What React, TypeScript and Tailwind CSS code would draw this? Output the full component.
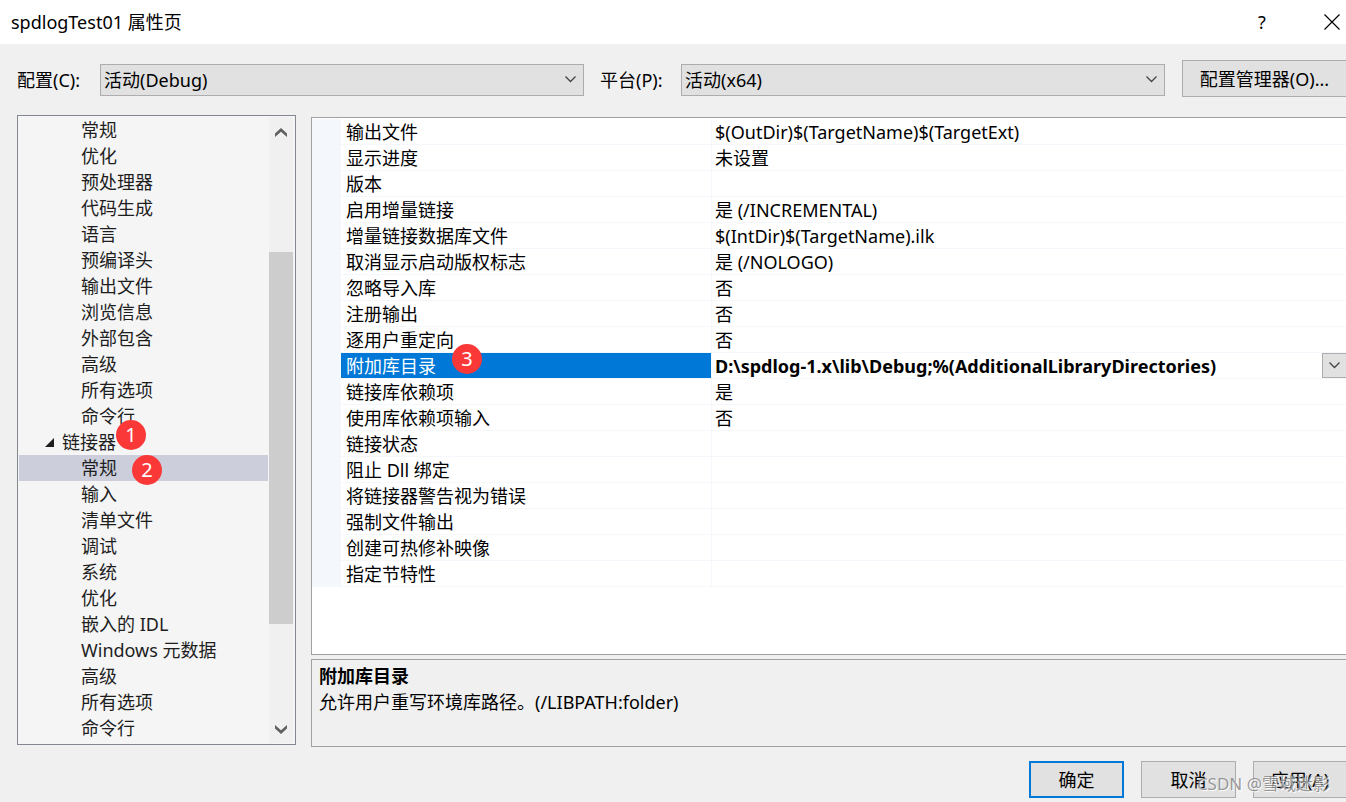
import React, { useState } from "react";
import clsx from "clsx";

type TreeNode = { id: string; label: string; parent?: boolean; badge?: string };
type Property = { name: string; value: string; badge?: string };

const treeNodes: TreeNode[] = [
  { id: "cpp-general", label: "常规" },
  { id: "cpp-optimize", label: "优化" },
  { id: "cpp-preprocessor", label: "预处理器" },
  { id: "cpp-codegen", label: "代码生成" },
  { id: "cpp-language", label: "语言" },
  { id: "cpp-pch", label: "预编译头" },
  { id: "cpp-output", label: "输出文件" },
  { id: "cpp-browse", label: "浏览信息" },
  { id: "cpp-external", label: "外部包含" },
  { id: "cpp-advanced", label: "高级" },
  { id: "cpp-all", label: "所有选项" },
  { id: "cpp-cmd", label: "命令行" },
  { id: "linker", label: "链接器", parent: true, badge: "1" },
  { id: "link-general", label: "常规", badge: "2" },
  { id: "link-input", label: "输入" },
  { id: "link-manifest", label: "清单文件" },
  { id: "link-debug", label: "调试" },
  { id: "link-system", label: "系统" },
  { id: "link-optimize", label: "优化" },
  { id: "link-idl", label: "嵌入的 IDL" },
  { id: "link-winmd", label: "Windows 元数据" },
  { id: "link-advanced", label: "高级" },
  { id: "link-all", label: "所有选项" },
  { id: "link-cmd", label: "命令行" },
];

const properties: Property[] = [
  { name: "输出文件", value: "$(OutDir)$(TargetName)$(TargetExt)" },
  { name: "显示进度", value: "未设置" },
  { name: "版本", value: "" },
  { name: "启用增量链接", value: "是 (/INCREMENTAL)" },
  { name: "增量链接数据库文件", value: "$(IntDir)$(TargetName).ilk" },
  { name: "取消显示启动版权标志", value: "是 (/NOLOGO)" },
  { name: "忽略导入库", value: "否" },
  { name: "注册输出", value: "否" },
  { name: "逐用户重定向", value: "否" },
  { name: "附加库目录", value: "D:\\spdlog-1.x\\lib\\Debug;%(AdditionalLibraryDirectories)", badge: "3" },
  { name: "链接库依赖项", value: "是" },
  { name: "使用库依赖项输入", value: "否" },
  { name: "链接状态", value: "" },
  { name: "阻止 Dll 绑定", value: "" },
  { name: "将链接器警告视为错误", value: "" },
  { name: "强制文件输出", value: "" },
  { name: "创建可热修补映像", value: "" },
  { name: "指定节特性", value: "" },
];

export default function App() {
  const [activeNode, setActiveNode] = useState("link-general");
  const [activeProperty, setActiveProperty] = useState("附加库目录");

  return (
    <div className="relative flex min-h-screen flex-col overflow-hidden bg-[#f0f0f0] font-['Noto_Sans','Noto_Sans_CJK_SC',sans-serif] text-lg/[26px] text-black">
      {/* Title bar */}
      <header className="flex h-11 items-center bg-white pl-[11px] pr-1.5">
        <h1 className="flex-1">spdlogTest01 属性页</h1>
        <button aria-label="帮助" className="mr-[54px] w-4 text-center">?</button>
        <button aria-label="关闭" className="py-2">
          <svg width="16" height="16" viewBox="0 0 16 16" fill="none" stroke="#000" strokeWidth="1.2">
            <path d="M.5.5l15 15M15.5.5l-15 15" />
          </svg>
        </button>
      </header>

      {/* Configuration and platform */}
      <div className="flex items-end pt-4 pl-[17px]">
        <label htmlFor="config" className="w-[83px] pb-1">配置(C):</label>
        <Dropdown id="config" option="活动(Debug)" />
        <label htmlFor="platform" className="ml-4 w-[81px] pb-1">平台(P):</label>
        <Dropdown id="platform" option="活动(x64)" />
        <button className="ml-[17px] h-[37px] w-[164px] border border-r-0 border-[#adadad] bg-[#e1e1e1]">
          配置管理器(O)...
        </button>
      </div>

      <main className="flex flex-1 gap-[15px] pt-[18px] pl-[17px]">
        {/* Category tree */}
        <nav className="mb-0.5 flex w-[279px] shrink-0 border border-[#828790] bg-[#f5f5f5] p-px">
          <ul className="flex-1 text-[#1e1e1e]">
            {treeNodes.map((node) => (
              <li key={node.id} className="relative">
                <button
                  onClick={() => setActiveNode(node.id)}
                  className={clsx(
                    "flex h-[26px] w-full items-center text-left",
                    node.parent ? "gap-2 pl-[26px]" : "pl-[62px]",
                    activeNode === node.id && "bg-[#cccedb]"
                  )}
                >
                  {node.parent && (
                    <svg width="9" height="9" viewBox="0 0 9 9" fill="#1e1e1e">
                      <path d="M9 0v9H0z" />
                    </svg>
                  )}
                  {node.label}
                </button>
                {node.badge && (
                  <Badge label={node.badge} className={node.parent ? "-top-[9px] left-[97px]" : "top-0 left-[113px]"} />
                )}
              </li>
            ))}
          </ul>
          <ScrollBar />
        </nav>

        <div className="flex min-w-0 flex-1 flex-col gap-1 pt-0.5">
          {/* Property grid */}
          <div className="flex-1 border border-r-0 border-[#a0a0a0] bg-white pt-px">
            <table className="w-full table-fixed border-separate border-spacing-0">
              <colgroup>
                <col className="w-[29px]" />
                <col className="w-[370px]" />
                <col />
              </colgroup>
              <tbody>
                {properties.map((property) => (
                  <PropertyRow
                    key={property.name}
                    property={property}
                    active={property.name === activeProperty}
                    onSelect={() => setActiveProperty(property.name)}
                  />
                ))}
              </tbody>
            </table>
          </div>

          {/* Description */}
          <section className="h-[88px] border border-r-0 border-[#a0a0a0] px-[7px] pt-[3px]">
            <h2 className="font-bold">附加库目录</h2>
            <p>允许用户重写环境库路径。(/LIBPATH:folder)</p>
          </section>
        </div>
      </main>

      <footer className="flex justify-end gap-[17px] pt-3.5 pb-1">
        <button className="h-[37px] w-[95px] border-2 border-[#0078d7] bg-[#e1e1e1]">确定</button>
        <button className="h-[37px] w-[95px] border border-[#adadad] bg-[#e1e1e1]">取消</button>
        <button className="h-[37px] w-[93px] border border-r-0 border-[#adadad] bg-[#e1e1e1]">应用(A)</button>
      </footer>

      {/* Watermark */}
      <div className="pointer-events-none absolute right-4 bottom-1.5 text-[17px]/6 text-[#808080]/80 [text-shadow:1px_1px_1px_white]">
        CSDN @雪域迷影
      </div>
    </div>
  );
}

const Dropdown = ({ id, option }: { id: string; option: string }) => (
  <div className="relative mb-px flex-1">
    <select id={id} className="block h-8 w-full appearance-none border border-[#adadad] bg-[#e1e1e1] pl-[3px]">
      <option>{option}</option>
    </select>
    <Chevron className="pointer-events-none absolute top-3 right-2" />
  </div>
);

const PropertyRow = ({ property, active, onSelect }: { property: Property; active: boolean; onSelect: () => void }) => (
  <tr onClick={onSelect} className="h-[26px]">
    <td className="bg-[#f4f7fc] p-0" />
    <th
      scope="row"
      className={clsx(
        "relative border-b border-[#f4f7fc] p-0 pt-0.5 pl-[5px] text-left leading-[23px] font-normal",
        active && "bg-[#0078d7] bg-clip-padding text-white"
      )}
    >
      {property.name}
      {property.badge && <Badge label={property.badge} className="-top-[9px] left-[111px]" />}
    </th>
    <td className={clsx("border-b border-l border-[#f4f7fc] p-0 leading-[23px]", !active && "pt-0.5")}>
      {active ? (
        <div className="flex h-[25px]">
          <input
            aria-label={property.name}
            defaultValue={property.value}
            className="min-w-0 flex-1 pt-0.5 pl-[3px] font-bold outline-none"
          />
          <button
            aria-label="展开"
            className="flex w-6 items-center justify-center border border-r-0 border-[#adadad] bg-[#e1e1e1]"
          >
            <Chevron />
          </button>
        </div>
      ) : (
        <span className="pl-[3px]">{property.value}</span>
      )}
    </td>
  </tr>
);

const ScrollBar = () => (
  <div className="mr-px ml-px flex w-6 flex-col bg-[#f0f0f0]">
    <button aria-label="向上滚动" className="flex h-[30px] items-center justify-center">
      <svg width="12" height="9" viewBox="0 0 12 9" fill="#606060">
        <path d="M6 0l6 5.5V9L6 3.8 0 9V5.5z" />
      </svg>
    </button>
    <div className="flex flex-1 flex-col">
      <div className="flex-[105]" />
      <div className="flex-[372] bg-[#cdcdcd]" />
      <div className="flex-[90]" />
    </div>
    <button aria-label="向下滚动" className="flex h-[29px] items-center justify-center pt-0.5">
      <svg width="12" height="9" viewBox="0 0 12 9" fill="#606060">
        <path d="M6 9l6-5.5V0L6 5.2 0 0v3.5z" />
      </svg>
    </button>
  </div>
);

const Badge = ({ label, className }: { label: string; className: string }) => (
  <span
    className={clsx(
      "pointer-events-none absolute z-10 flex size-[30px] items-center justify-center rounded-full bg-[#fb3838] text-xl/[30px] text-white",
      className
    )}
  >
    {label}
  </span>
);

const Chevron = ({ className }: { className?: string }) => (
  <svg className={className} width="11" height="7" viewBox="0 0 11 7" fill="none" stroke="#444" strokeWidth="1.3">
    <path d="M.5.5l5 5 5-5" />
  </svg>
);
